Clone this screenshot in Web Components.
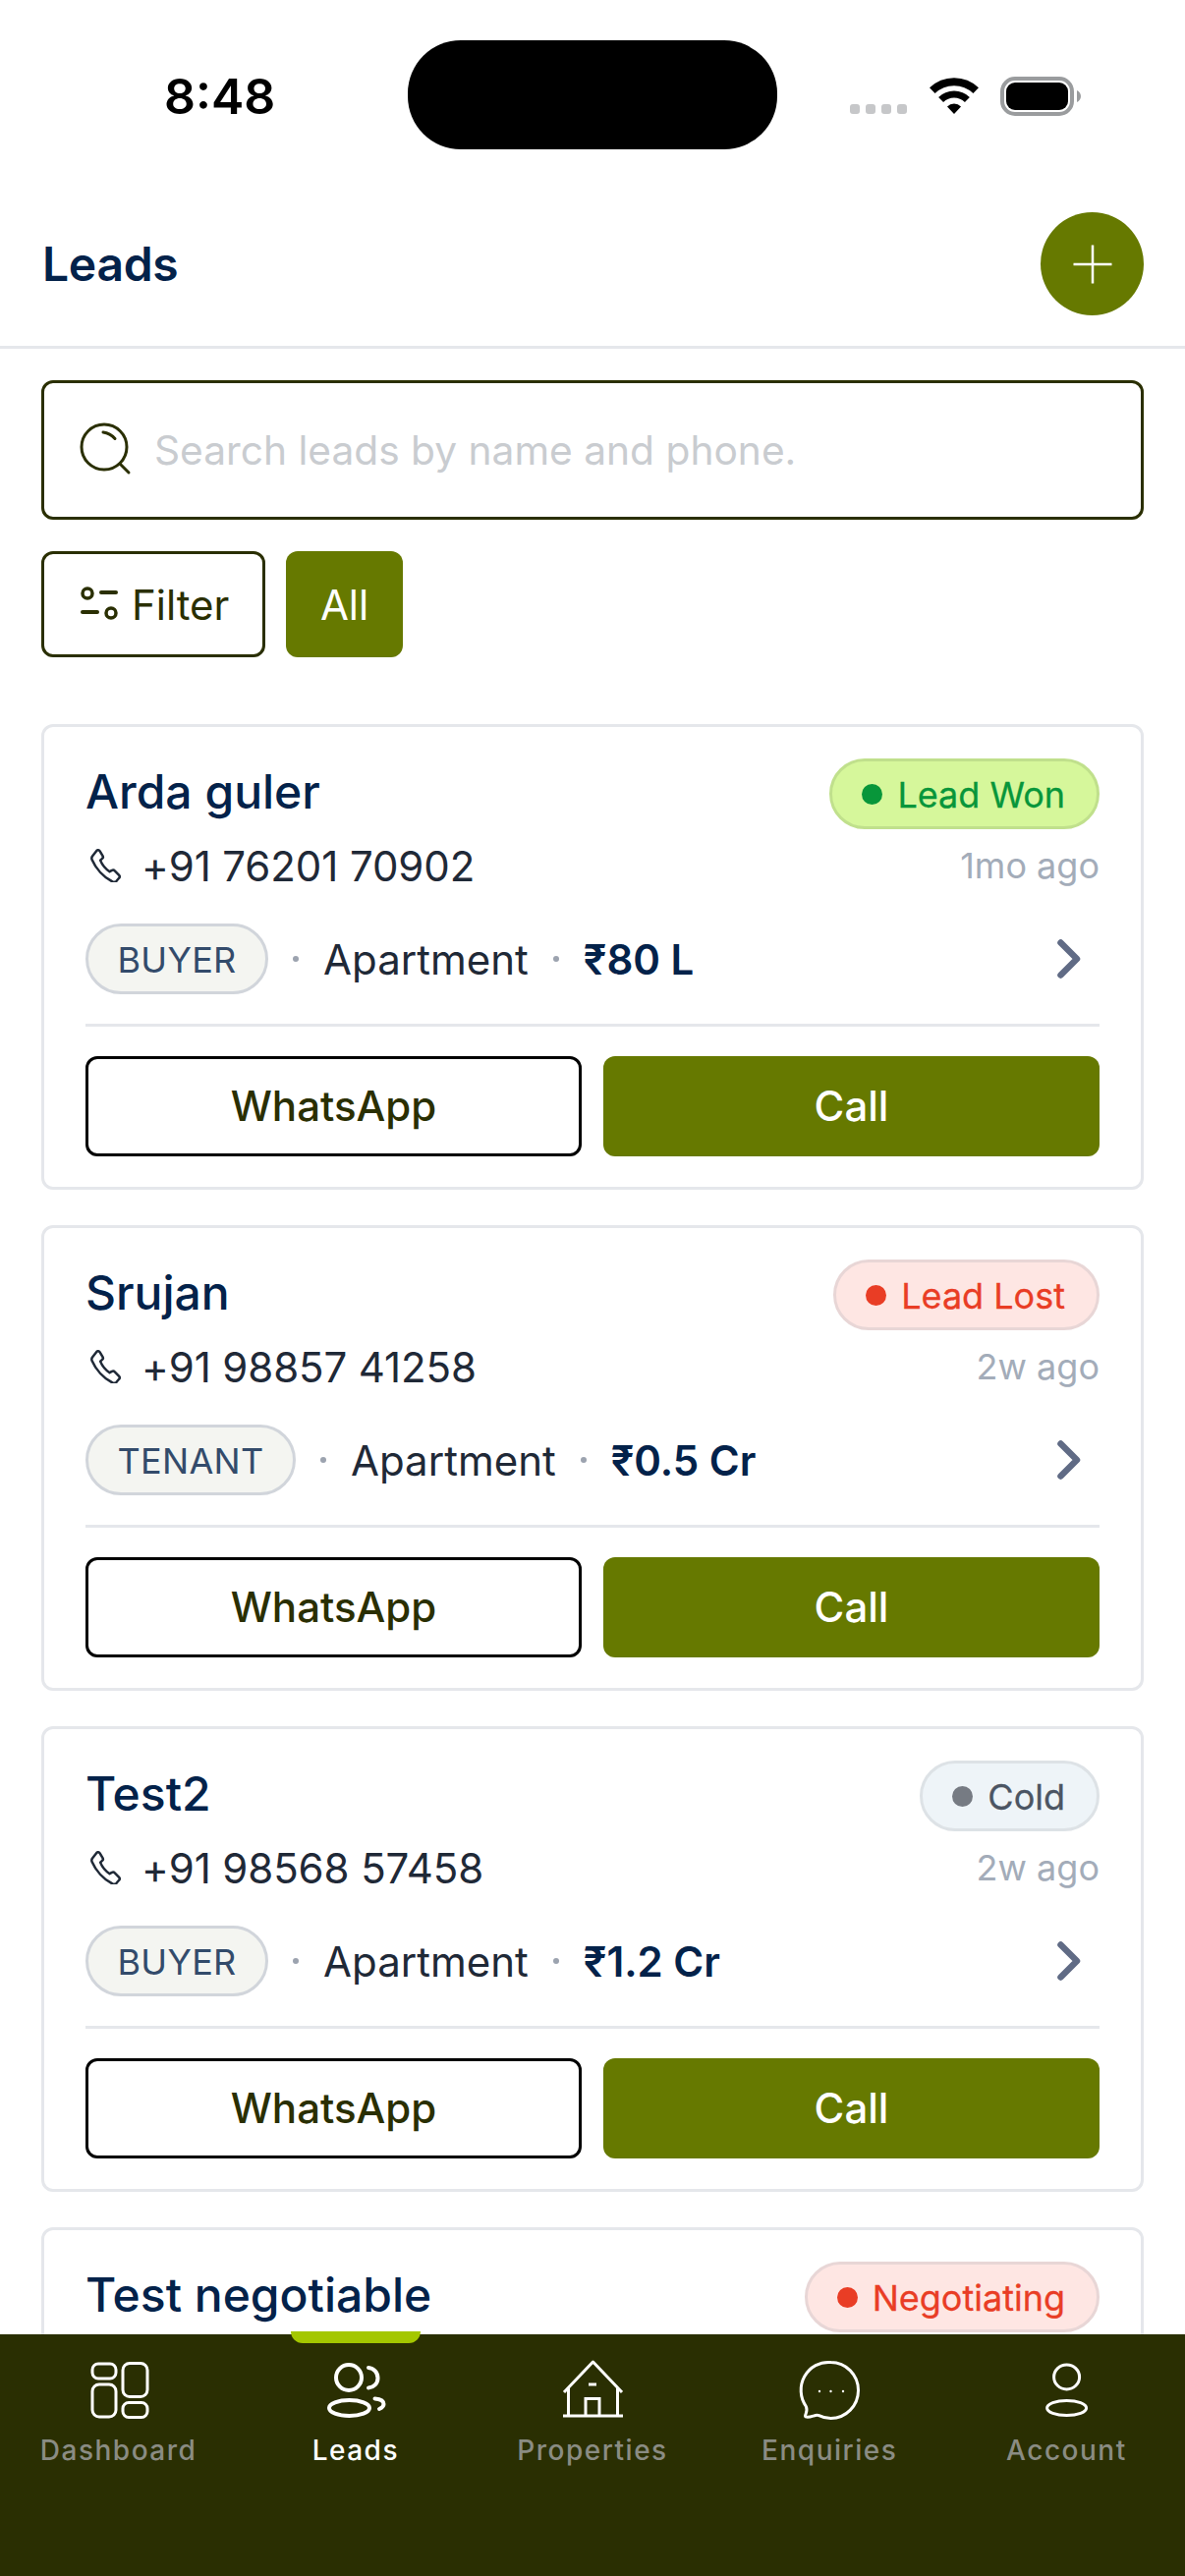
<!DOCTYPE html>
<html lang="en">
<head>
<meta charset="utf-8">
<title>Leads</title>
<style>
  html, body { margin: 0; padding: 0; height: 2622px; overflow: hidden; background: #fff; }
  body { font-family: Inter, "Liberation Sans", sans-serif; }
  .app { display: flex; flex-direction: column; height: 2622px; }
</style>
</head>
<body>
<div class="app">
  <status-bar time="8:48"></status-bar>
  <page-header>Leads</page-header>
  <leads-list>
    <search-box>Search leads by name and phone.</search-box>
    <filter-row></filter-row>
    <lead-card status="won">
      <span slot="name">Arda guler</span>
      <span slot="status">Lead Won</span>
      <span slot="phone">+91 76201 70902</span>
      <span slot="age">1mo ago</span>
      <span slot="role">BUYER</span>
      <span slot="type">Apartment</span>
      <span slot="price">₹80 L</span>
    </lead-card>
    <lead-card status="lost">
      <span slot="name">Srujan</span>
      <span slot="status">Lead Lost</span>
      <span slot="phone">+91 98857 41258</span>
      <span slot="age">2w ago</span>
      <span slot="role">TENANT</span>
      <span slot="type">Apartment</span>
      <span slot="price">₹0.5 Cr</span>
    </lead-card>
    <lead-card status="cold">
      <span slot="name">Test2</span>
      <span slot="status">Cold</span>
      <span slot="phone">+91 98568 57458</span>
      <span slot="age">2w ago</span>
      <span slot="role">BUYER</span>
      <span slot="type">Apartment</span>
      <span slot="price">₹1.2 Cr</span>
    </lead-card>
    <lead-card status="lost">
      <span slot="name">Test negotiable</span>
      <span slot="status">Negotiating</span>
    </lead-card>
  </leads-list>
  <bottom-nav>
    <nav-item icon="dashboard">Dashboard</nav-item>
    <nav-item icon="leads" active>Leads</nav-item>
    <nav-item icon="properties">Properties</nav-item>
    <nav-item icon="enquiries">Enquiries</nav-item>
    <nav-item icon="account">Account</nav-item>
  </bottom-nav>
</div>

<script>
// status bar with the island, wifi and battery
class StatusBar extends HTMLElement {
  constructor() {
    super();
    this.attachShadow({ mode: 'open' });
    this.shadowRoot.innerHTML = `
      <style>
        :host { display: flex; height: 185px; flex: none; align-items: flex-start; color: #000; }
        .time { width: 110px; margin: 71px 0 0 167px; font-size: 50px; line-height: 54px; font-weight: 600; text-align: center; }
        .island { width: 376px; height: 111px; margin: 41px 0 0 138px; border-radius: 54px; background: #000; }
        .dots { display: flex; gap: 6px; margin: 106px 0 0 74px; }
        .dots i { width: 10px; height: 10px; border-radius: 3px; background: #c6c7c9; }
        svg { display: block; }
        .wifi { margin: 79px 0 0 23px; }
        .battery { margin: 78px 0 0 22px; }
      </style>
      <div class="time">${this.getAttribute('time')}</div>
      <div class="island"></div>
      <div class="dots"><i></i><i></i><i></i><i></i></div>
      <svg class="wifi" width="50" height="37" viewBox="0 0 50 37" fill="none">
        <path d="M2.8 13.2a32 32 0 0 1 44.4 0" stroke="#000" stroke-width="8"/>
        <path d="M11.6 22.6a19 19 0 0 1 26.8 0" stroke="#000" stroke-width="7"/>
        <path d="M25 37l-7-7.6a10 10 0 0 1 14 0z" fill="#000"/>
      </svg>
      <svg class="battery" width="83" height="40" viewBox="0 0 83 40" fill="none">
        <rect x="2" y="2" width="71" height="36" rx="13" stroke="#9a9c9e" stroke-width="4"/>
        <rect x="6" y="6" width="63" height="28" rx="9" fill="#000"/>
        <path d="M78 14c2.500 1 4 3.500 4 6s-1.500 5-4 6z" fill="#9a9c9e"/>
      </svg>`;
  }
}

class PageHeader extends HTMLElement {
  constructor() {
    super();
    this.attachShadow({ mode: 'open' });
    this.shadowRoot.innerHTML = `
      <style>
        :host { display: flex; flex: none; height: 167px; align-items: center; justify-content: space-between;
                padding: 0 42px 0 43px; border-bottom: 3px solid #e5e7eb; }
        .title { font-size: 48px; font-weight: 600; letter-spacing: -.3px; color: #03224a; }
        .fab { width: 105px; height: 105px; border-radius: 50%; background: #667900; display: flex; align-items: center; justify-content: center; }
      </style>
      <div class="title"><slot></slot></div>
      <div class="fab">
        <svg width="42" height="42" viewBox="0 0 42 42" fill="none" stroke="#fff" stroke-width="2.500"><path d="M21 1.500v39M1.500 21h39"/></svg>
      </div>`;
  }
}

class LeadsList extends HTMLElement {
  constructor() {
    super();
    this.attachShadow({ mode: 'open' });
    this.shadowRoot.innerHTML = `
      <style>
        :host { display: flex; flex-direction: column; flex: 1; min-height: 0; overflow: hidden; padding: 32px 42px 0; }
      </style>
      <slot></slot>`;
  }
}

class SearchBox extends HTMLElement {
  constructor() {
    super();
    this.attachShadow({ mode: 'open' });
    this.shadowRoot.innerHTML = `
      <style>
        :host { display: flex; flex: none; box-sizing: border-box; height: 142px; align-items: center; gap: 19px;
                padding: 0 33px; border: 3px solid #2a2f02; border-radius: 12px; font-size: 40.700px; color: #c9ccd0; }
        svg { display: block; flex: none; }
      </style>
      <svg width="60" height="60" viewBox="0 0 60 60" fill="none" stroke="#2a2f02" stroke-width="3" stroke-linecap="round">
        <circle cx="28" cy="27" r="23"/>
        <path d="M27 12c5 .6 9 3 12 6.500"/>
        <path d="M44 44l9 9"/>
      </svg>
      <span><slot></slot></span>`;
  }
}

class FilterRow extends HTMLElement {
  constructor() {
    super();
    this.attachShadow({ mode: 'open' });
    this.shadowRoot.innerHTML = `
      <style>
        :host { display: flex; flex: none; gap: 21px; margin-top: 32px; margin-bottom: 68px; font-size: 42px; }
        .chip { box-sizing: border-box; height: 108px; display: flex; align-items: center; border-radius: 12px; }
        .filter { gap: 14px; padding: 0 34px 0 37px; border: 3px solid #2a2f02; color: #2a2f02; }
        .all { padding: 0 34.500px; background: #667900; color: #fff; }
        svg { display: block; }
      </style>
      <div class="chip filter">
        <svg width="38" height="36" viewBox="0 0 38 36" fill="none" stroke="#2a2f02" stroke-linecap="round">
          <circle cx="7" cy="7" r="5" stroke-width="3.500"/>
          <path d="M21 6h15" stroke-width="4"/>
          <path d="M2 26h15" stroke-width="4"/>
          <circle cx="31" cy="27" r="5" stroke-width="3.500"/>
        </svg>
        <span>Filter</span>
      </div>
      <div class="chip all">All</div>`;
  }
}

const STATUS_COLORS = {
  won:  { bg: '#d6f79b', border: '#c0e08c', text: '#08963a' },
  lost: { bg: '#fee6e3', border: '#e8d6d6', text: '#e93d25' },
  cold: { bg: '#eef4f8', border: '#dde2e6', text: '#4b5563', dot: '#767b83' }
};

class LeadCard extends HTMLElement {
  constructor() {
    super();
    this.attachShadow({ mode: 'open' });
    const c = STATUS_COLORS[this.getAttribute('status')] || STATUS_COLORS.cold;
    const details = this.querySelector('[slot=phone]') ? `
      <div class="row second">
        <div class="phone">
          <svg width="32" height="34" viewBox="0 0 32 34" fill="none" stroke="#1f2937" stroke-width="2.500" stroke-linejoin="round">
            <path d="M2 7.500 6.500 1.800c1-.9 2.300-.7 3 .3l3 5c.6 1 .4 2.100-.4 2.800l-2 1.700c1.700 4.300 5 8.600 9.500 11.600l2.300-1.300c1-.6 2.100-.4 2.900.5l4.400 4.400c.8.900.8 2.100-.1 3l-2.600 3c-1 1-2.500 1.200-4 .6C13.500 29 5.500 20 1.600 11c-.5-1.200-.3-2.500.4-3.500z"/>
          </svg>
          <span class="number"><slot name="phone"></slot></span>
        </div>
        <div class="age"><slot name="age"></slot></div>
      </div>
      <div class="row meta">
        <div class="meta-left">
          <div class="tag"><slot name="role"></slot></div>
          <i class="sep"></i>
          <slot name="type"></slot>
          <i class="sep"></i>
          <span class="price"><slot name="price"></slot></span>
        </div>
        <svg class="chev" width="24" height="40" viewBox="0 0 24 40" fill="none" stroke="#606b85" stroke-width="6.500" stroke-linecap="round" stroke-linejoin="round">
          <path d="M3.500 3.500 20 20 3.500 36.500"/>
        </svg>
      </div>
      <hr>
      <div class="actions">
        <div class="btn wa">WhatsApp</div>
        <div class="btn call">Call</div>
      </div>` : '';
    this.shadowRoot.innerHTML = `
      <style>
        :host { display: block; flex: none; box-sizing: border-box; height: 474px; margin-bottom: 36px;
                padding: 32px 42px 0; border: 3px solid #e5e7eb; border-radius: 12px; background: #fff; }
        .row { display: flex; align-items: center; justify-content: space-between; }
        .name { font-size: 48px; font-weight: 500; color: #03224a; padding-bottom: 5px; }
        .pill { box-sizing: border-box; height: 72px; display: flex; align-items: center; gap: 15px; padding: 2px 32px 0 30px;
                border: 3px solid ${c.border}; border-radius: 36px; background: ${c.bg}; color: ${c.text};
                font-size: 36px; font-weight: 400; -webkit-text-stroke: .3px ${c.text}; }
        .pill i { width: 21px; height: 21px; margin-top: -2px; border-radius: 50%; background: ${c.dot || c.text}; }
        .second { height: 42px; margin-top: 16px; }
        .phone { display: flex; align-items: center; gap: 20px; padding-left: 5px; font-size: 42px; color: #1f2937; }
        .number { letter-spacing: -.1px; }
        .age { font-size: 36px; color: #a3acb9; }
        .meta { height: 72px; margin-top: 38px; }
        .meta-left { display: flex; align-items: center; gap: 25px; font-size: 42px; color: #1f2937; }
        .tag { box-sizing: border-box; height: 72px; display: flex; align-items: center; padding: 2px 29.500px 0; border: 3px solid #d1d5db;
               border-radius: 36px; background: #f4f5f1; color: #334b6b; font-size: 36px; letter-spacing: .3px; }
        .sep { width: 6px; height: 6px; border-radius: 50%; background: #9ca3af; }
        .price { font-weight: 600; color: #03224a; }
        .chev { margin-right: 19px; }
        hr { margin: 30px 0; border: 0; height: 3px; background: #e5e7eb; }
        .actions { display: grid; grid-template-columns: 1fr 1fr; gap: 22px; }
        .btn { box-sizing: border-box; height: 102px; display: flex; align-items: center; justify-content: center;
               padding-bottom: 2px; border-radius: 12px; font-size: 42px; font-weight: 500; }
        .wa { border: 3.500px solid #000; color: #2a2f02; }
        .call { background: #667900; color: #fff; }
        svg { display: block; flex: none; }
      </style>
      <div class="row">
        <div class="name"><slot name="name"></slot></div>
        <div class="pill"><i></i><slot name="status"></slot></div>
      </div>
      ${details}`;
  }
}

class BottomNav extends HTMLElement {
  constructor() {
    super();
    this.attachShadow({ mode: 'open' });
    this.shadowRoot.innerHTML = `
      <style>
        :host { display: flex; flex: none; height: 246px; background: #2a2f02; position: relative; }
      </style>
      <slot></slot>`;
  }
}

const NAV_ICONS = {
  dashboard: `<g stroke-width="3"><rect x="3" y="3" width="24" height="15" rx="6"/><rect x="3" y="24" width="24" height="33" rx="7"/><rect x="34" y="2.500" width="25" height="34" rx="7"/><rect x="34" y="42.500" width="25" height="15" rx="6"/></g>`,
  leads: `<g stroke-width="4" stroke-linecap="round"><circle cx="23" cy="17" r="13"/><ellipse cx="23.500" cy="48" rx="20.500" ry="8"/><path d="M43 7c5.500.5 9.500 5 9.500 10.500s-4 9.500-9.500 10"/><path d="M49.500 38.500c5.500.5 9 2.500 9 5.500 0 2-1.800 3.800-4.500 5"/></g>`,
  properties: `<g stroke-width="3"><path d="M1 32 30.500 1 60 32" stroke-linejoin="round"/><path d="M5.500 28v28M55.500 28v28M0 56h61"/><path d="M23 56V38.500h14V56"/><path d="M26 24h8"/></g>`,
  enquiries: `<g stroke-width="3"><path d="M31.500 1.500a28 28.500 0 0 1 0 57c-4.500 0-8.500-1.100-12-2.900-2-.9-4-.1-6 .6-3 1-6 1.500-7.500.8-1-.6-.3-2 .1-3 1-2.500 1.300-5 .3-7.500A28 28.500 0 0 1 31.500 1.500z" stroke-linejoin="round"/></g><g fill="#fff" stroke="none"><circle cx="20" cy="31" r="1.200"/><circle cx="31.500" cy="31" r="1.200"/><circle cx="44" cy="31" r="1.200"/></g>`,
  account: `<g stroke-width="3"><ellipse cx="30.600" cy="16.400" rx="13" ry="12.500"/><ellipse cx="30.600" cy="48" rx="20" ry="7.600"/></g>`
};

class NavItem extends HTMLElement {
  constructor() {
    super();
    this.attachShadow({ mode: 'open' });
    const active = this.hasAttribute('active');
    this.shadowRoot.innerHTML = `
      <style>
        :host { display: flex; flex: 1; flex-direction: column; align-items: center; padding-top: 27px; position: relative;
                font-size: 28px; letter-spacing: 1.500px; font-weight: 500; color: ${active ? '#fff' : '#8a8c83'}; }
        svg { display: block; overflow: visible; }
        .label { margin-top: 14px; line-height: 34px; }
        .bar { position: absolute; top: -3px; left: 55px; width: 132px; height: 12px; background: #a4c700; border-radius: 0 0 12px 12px; }
      </style>
      ${active ? '<div class="bar"></div>' : ''}
      <svg width="60" height="60" viewBox="0 0 60 60" fill="none" stroke="#fff">${NAV_ICONS[this.getAttribute('icon')]}</svg>
      <div class="label"><slot></slot></div>`;
  }
}

customElements.define('status-bar', StatusBar);
customElements.define('page-header', PageHeader);
customElements.define('leads-list', LeadsList);
customElements.define('search-box', SearchBox);
customElements.define('filter-row', FilterRow);
customElements.define('lead-card', LeadCard);
customElements.define('bottom-nav', BottomNav);
customElements.define('nav-item', NavItem);
</script>
</body>
</html>
